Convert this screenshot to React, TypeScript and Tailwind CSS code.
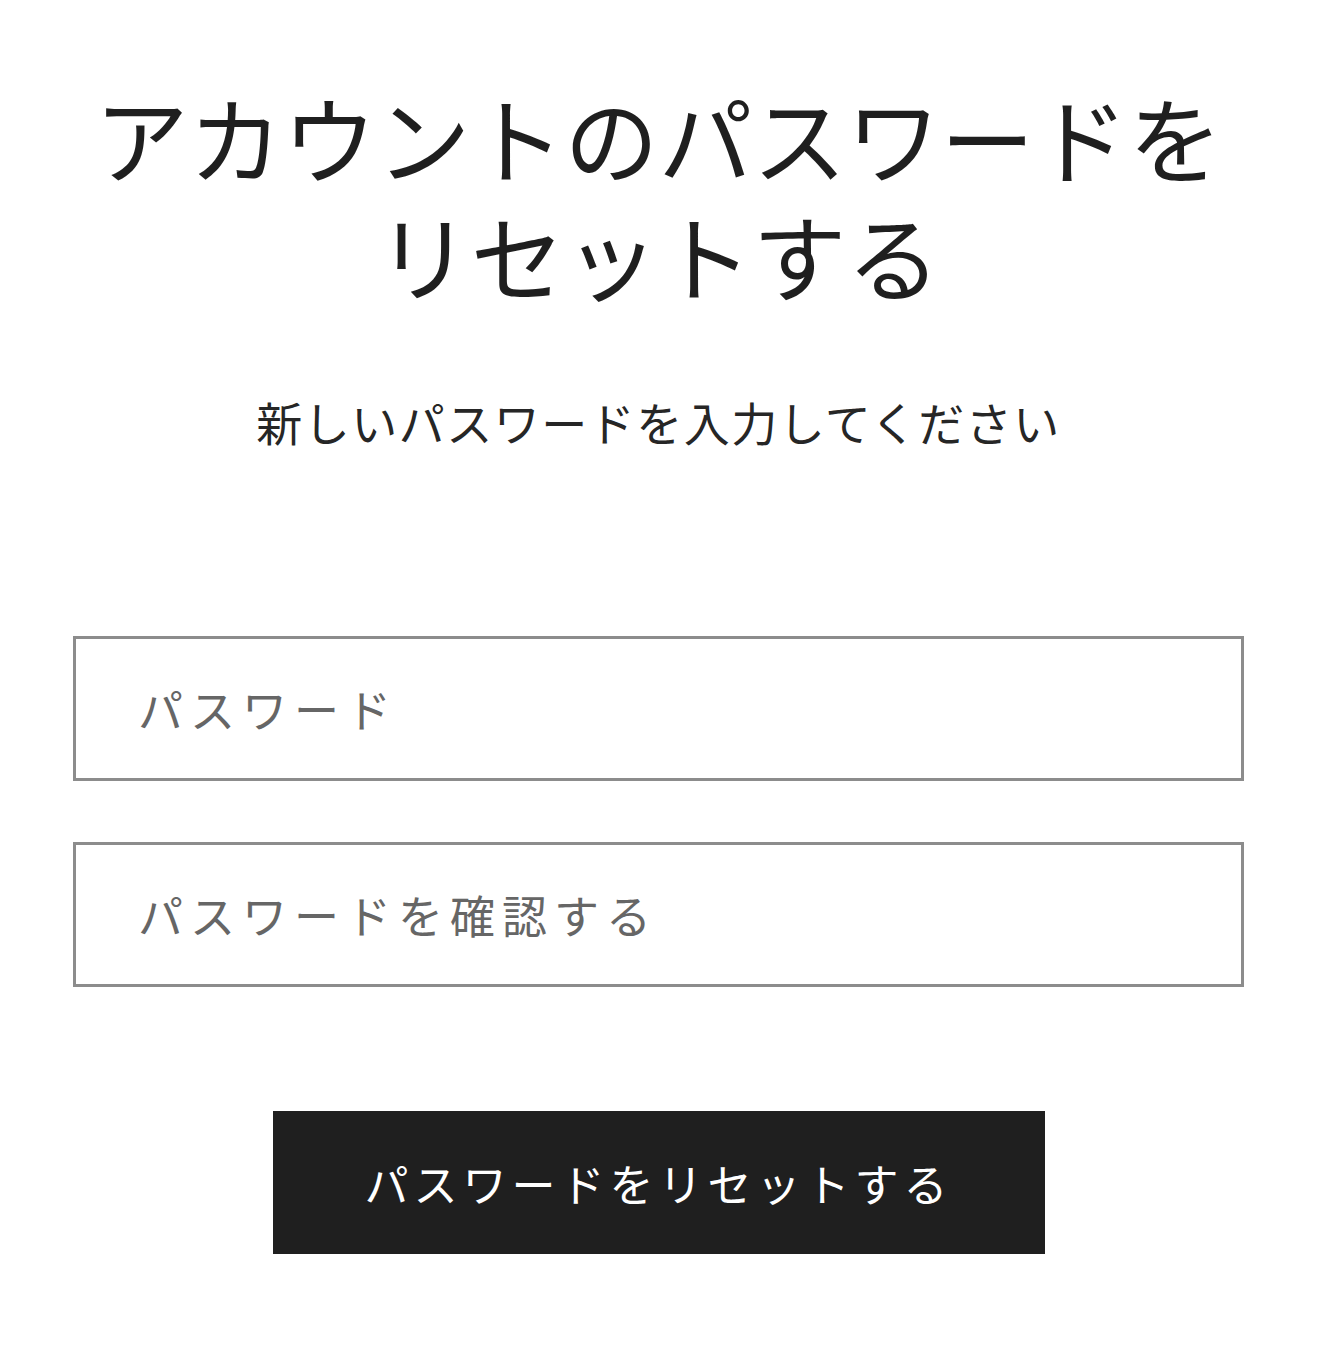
export default function App() {
  const jp = "font-['Noto_Sans_CJK_JP','Noto_Sans_CJK_SC',sans-serif]";

  return (
    <div className={`min-h-[1357px] w-full bg-white ${jp} text-[#1f1f1f]`}>
      <main className="mx-auto flex max-w-[1317px] flex-col items-center px-[73px] pt-[77px]">
        <h1 className="text-center text-[94px] font-normal leading-[118px] tracking-[0px]">
          アカウントのパスワードを
          <br />
          リセットする
        </h1>

        <p className="mt-[78px] text-center text-[46px] leading-[60px] tracking-[1.5px] text-[#262626]">
          新しいパスワードを入力してください
        </p>

        <form className="mt-[185px] flex w-full flex-col gap-[61px]">
          <input
            type="password"
            placeholder="パスワード"
            className="h-[145px] w-full border-[3px] border-[#8c8c8c] bg-white px-[62px] text-[45px] tracking-[7px] text-[#1f1f1f] outline-none placeholder:text-[#666666]"
          />
          <input
            type="password"
            placeholder="パスワードを確認する"
            className="h-[145px] w-full border-[3px] border-[#8c8c8c] bg-white px-[62px] text-[45px] tracking-[7px] text-[#1f1f1f] outline-none placeholder:text-[#666666]"
          />
          <div className="mt-[63px] flex justify-center">
            <button
              type="button"
              className="h-[143px] w-[772px] bg-[#1f1f1f] text-[44px] tracking-[5px] text-white"
            >
              パスワードをリセットする
            </button>
          </div>
        </form>
      </main>
    </div>
  );
}
